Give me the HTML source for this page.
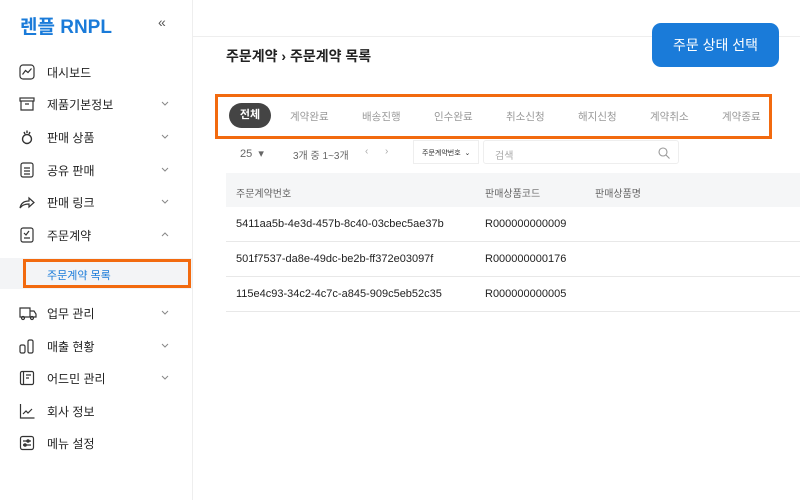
<!DOCTYPE html>
<html><head><meta charset="utf-8"><style>
*{margin:0;padding:0;box-sizing:border-box}
body{width:800px;height:500px;overflow:hidden;background:#fff;font-family:"Liberation Sans","Noto Sans CJK KR",sans-serif;color:#222;position:relative}
.sb{position:absolute;left:0;top:0;width:193px;height:500px;border-right:1px solid #eee}
.logo{position:absolute;left:20px;top:12px;font-size:19px;font-weight:bold;color:#1a7bd9}
.col{position:absolute;left:158px;top:14px;font-size:14px;color:#555}
.it{position:absolute;left:0;width:192px;height:32px;font-size:12px;color:#222}
.it svg{position:absolute;left:19px;top:8px}
.it span{position:absolute;left:47px;top:8px}
.it svg.ch{left:161px;top:13px}
.sel{position:absolute;left:0;top:258px;width:192px;height:31px;background:#f3f4f6}
.selb{position:absolute;left:23px;top:259px;width:168px;height:29px;border:3px solid #f26a0f;font-size:11px;color:#1a7bd9;padding:5px 0 0 21px}
.hl{position:absolute;left:193px;top:36px;width:607px;height:1px;background:#eee}
.tt{position:absolute;left:226px;top:46px;font-size:14px;font-weight:bold}
.btn{position:absolute;left:652px;top:23px;width:127px;height:44px;background:#1a7bd9;border-radius:9px;color:#fff;font-size:14px;text-align:center;line-height:44px}
.tabs{position:absolute;left:215px;top:94px;width:557px;height:45px;border:3px solid #f26a0f}
.tab{position:absolute;top:12px;font-size:10.5px;color:#999}
.act{position:absolute;left:11px;top:6px;width:42px;height:25px;background:#444;border-radius:13px;color:#fff;font-weight:bold;font-size:11px;text-align:center;line-height:25px}
.s{position:absolute;font-size:10px;color:#666}
.th{position:absolute;left:226px;top:173px;width:574px;height:34px;background:#f5f6f7}
.row{position:absolute;left:226px;width:574px;height:35px;border-bottom:1px solid #e8e8e8;font-size:11px;color:#222}
.row span{position:absolute;top:11px}
</style></head><body>
<div class="sb">
<div class="logo">렌플 RNPL</div><div class="col">«</div>
<div class="it" style="top:56px"><svg width="16" height="16" viewBox="0 0 16 16" fill="none" stroke="#333" stroke-width="1.2"><rect x="1" y="1" width="14" height="14" rx="3"/><path d="M3.5 10.5l3-4 2.5 2 3.5-4"/></svg><span>대시보드</span></div>
<div class="it" style="top:88px"><svg width="16" height="16" viewBox="0 0 16 16" fill="none" stroke="#333" stroke-width="1.2"><rect x="1" y="2" width="14" height="3"/><path d="M2 5v9h12V5M6 8h4"/></svg><span>제품기본정보</span><svg class="ch" width="8" height="5" viewBox="0 0 8 5" fill="none" stroke="#888"><path d="M1 1l3 3 3-3"/></svg></div>
<div class="it" style="top:121px"><svg width="16" height="16" viewBox="0 0 16 16" fill="none" stroke="#333" stroke-width="1.4"><circle cx="8" cy="10" r="4.5"/><path d="M5 3l1 2M11 3l-1 2M8 1.5v2.5"/></svg><span>판매 상품</span><svg class="ch" width="8" height="5" viewBox="0 0 8 5" fill="none" stroke="#888"><path d="M1 1l3 3 3-3"/></svg></div>
<div class="it" style="top:154px"><svg width="16" height="16" viewBox="0 0 16 16" fill="none" stroke="#333" stroke-width="1.2"><rect x="2" y="1" width="12" height="14" rx="2"/><path d="M5 6h6M5 9h6M5 12h6"/></svg><span>공유 판매</span><svg class="ch" width="8" height="5" viewBox="0 0 8 5" fill="none" stroke="#888"><path d="M1 1l3 3 3-3"/></svg></div>
<div class="it" style="top:186px"><svg width="16" height="16" viewBox="0 0 16 16" fill="none" stroke="#333" stroke-width="1.2"><path d="M1 14c1-5 4-7 9-7V4l5 4.5-5 4.5v-3c-4 0-7 1-9 4z"/></svg><span>판매 링크</span><svg class="ch" width="8" height="5" viewBox="0 0 8 5" fill="none" stroke="#888"><path d="M1 1l3 3 3-3"/></svg></div>
<div class="it" style="top:219px"><svg width="16" height="16" viewBox="0 0 16 16" fill="none" stroke="#333" stroke-width="1.2"><rect x="2" y="1" width="12" height="14" rx="2"/><path d="M5 6l2 2 3-4M5 11h6"/></svg><span>주문계약</span><svg class="ch" width="8" height="5" viewBox="0 0 8 5" fill="none" stroke="#888"><path d="M1 4l3-3 3 3"/></svg></div>
<div class="sel"></div><div class="selb">주문계약 목록</div>
<div class="it" style="top:297px"><svg width="18" height="16" viewBox="0 0 18 16" fill="none" stroke="#333" stroke-width="1.2"><path d="M1 3h10v9H1zM11 6h4l2 3v3h-6"/><circle cx="4" cy="13" r="1.5"/><circle cx="13" cy="13" r="1.5"/></svg><span>업무 관리</span><svg class="ch" width="8" height="5" viewBox="0 0 8 5" fill="none" stroke="#888"><path d="M1 1l3 3 3-3"/></svg></div>
<div class="it" style="top:330px"><svg width="16" height="16" viewBox="0 0 16 16" fill="none" stroke="#333" stroke-width="1.2"><rect x="1" y="7" width="5" height="8" rx="1.5"/><rect x="9" y="2" width="5" height="13" rx="1.5"/></svg><span>매출 현황</span><svg class="ch" width="8" height="5" viewBox="0 0 8 5" fill="none" stroke="#888"><path d="M1 1l3 3 3-3"/></svg></div>
<div class="it" style="top:362px"><svg width="16" height="16" viewBox="0 0 16 16" fill="none" stroke="#333" stroke-width="1.2"><rect x="1.5" y="1.5" width="13" height="13" rx="1.5"/><path d="M4.5 1.5v13M7 5h5M7 8h3"/></svg><span>어드민 관리</span><svg class="ch" width="8" height="5" viewBox="0 0 8 5" fill="none" stroke="#888"><path d="M1 1l3 3 3-3"/></svg></div>
<div class="it" style="top:395px"><svg width="16" height="16" viewBox="0 0 16 16" fill="none" stroke="#333" stroke-width="1.2"><path d="M1.5 1v14h14M4 11l3-3 2 2 4-4"/></svg><span>회사 정보</span></div>
<div class="it" style="top:427px"><svg width="16" height="16" viewBox="0 0 16 16" fill="none" stroke="#333" stroke-width="1.2"><rect x="1.5" y="1.5" width="13" height="13" rx="2"/><path d="M4 6h8M4 10h8"/><circle cx="9" cy="6" r="1.2"/><circle cx="6" cy="10" r="1.2"/></svg><span>메뉴 설정</span></div>
</div>
<div class="hl"></div>
<div class="tt">주문계약 › 주문계약 목록</div>
<div class="btn">주문 상태 선택</div>
<div class="tabs">
<div class="act">전체</div>
<div class="tab" style="left:72px">계약완료</div>
<div class="tab" style="left:144px">배송진행</div>
<div class="tab" style="left:216px">인수완료</div>
<div class="tab" style="left:288px">취소신청</div>
<div class="tab" style="left:360px">해지신청</div>
<div class="tab" style="left:432px">계약취소</div>
<div class="tab" style="left:504px">계약종료</div>
</div>
<div class="s" style="left:240px;top:147px;font-size:11px">25 &nbsp;▾</div>
<div class="s" style="left:293px;top:147px">3개 중 1~3개</div>
<div class="s" style="left:365px;top:146px;color:#aaa">‹ &nbsp;&nbsp;&nbsp;&nbsp; ›</div>
<div style="position:absolute;left:413px;top:140px;width:66px;height:24px;border:1px solid #eee;font-size:7px;color:#333;padding:7px 0 0 8px">주문계약번호 &nbsp;⌄</div>
<div style="position:absolute;left:483px;top:140px;width:196px;height:24px;border:1px solid #eee;border-radius:3px;font-size:10px;color:#aaa;padding:6px 0 0 11px">검색<svg style="position:absolute;right:8px;top:6px" width="12" height="12" viewBox="0 0 12 12" fill="none" stroke="#999" stroke-width="1.1"><circle cx="5" cy="5" r="4"/><path d="M8 8l3.5 3.5"/></svg></div>
<div class="th"><span class="s" style="left:10px;top:12px;color:#666">주문계약번호</span><span class="s" style="left:259px;top:12px">판매상품코드</span><span class="s" style="left:369px;top:12px">판매상품명</span></div>
<div class="row" style="top:207px"><span style="left:10px">5411aa5b-4e3d-457b-8c40-03cbec5ae37b</span><span style="left:259px">R000000000009</span></div>
<div class="row" style="top:242px"><span style="left:10px">501f7537-da8e-49dc-be2b-ff372e03097f</span><span style="left:259px">R000000000176</span></div>
<div class="row" style="top:277px"><span style="left:10px">115e4c93-34c2-4c7c-a845-909c5eb52c35</span><span style="left:259px">R000000000005</span></div>
</body></html>
